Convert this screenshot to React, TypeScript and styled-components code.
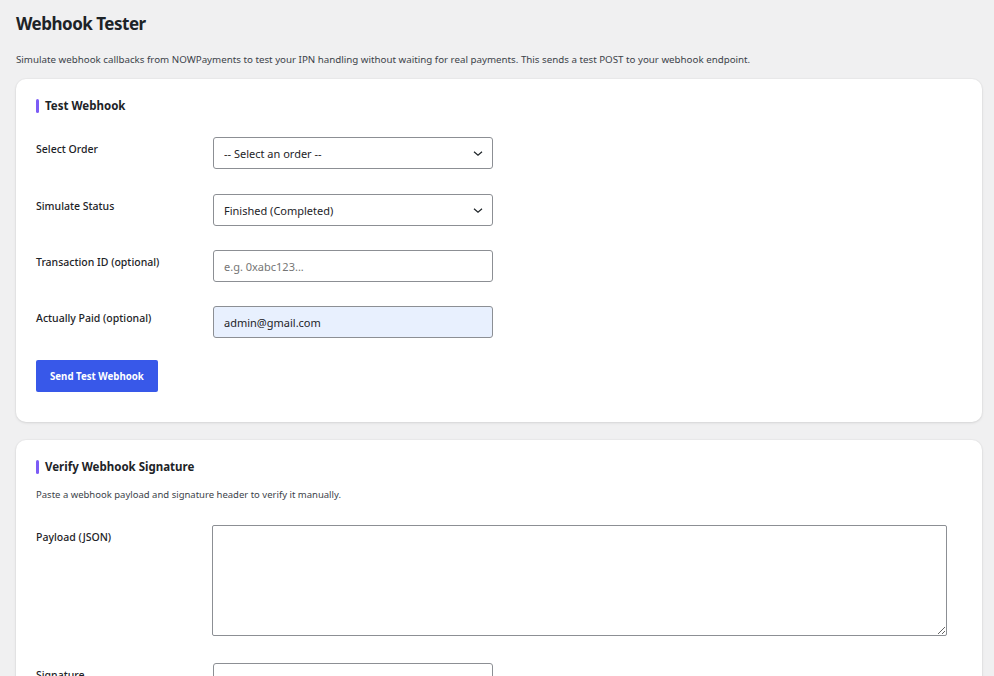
import React from 'react';
import styled, { createGlobalStyle } from 'styled-components';

const GlobalStyle = createGlobalStyle`
  html, body {
    margin: 0;
    padding: 0;
    background: #f0f0f1;
  }

  body {
    font-family: "Noto Sans", "Open Sans", sans-serif;
    color: #1d2327;
  }

  * {
    box-sizing: border-box;
  }
`;

const Page = styled.div`
  padding: 11px 12px 40px 16px;
`;

const PageTitle = styled.h1`
  margin: 0;
  font-size: 17px;
  line-height: 26px;
  font-weight: 700;
  letter-spacing: -0.5px;
  color: #1d2327;
`;

const Intro = styled.p`
  margin: 16px 0 12px;
  font-size: 9.75px;
  line-height: 14px;
  color: #3c434a;
`;

const Card = styled.section`
  background: #fff;
  border-radius: 10px;
  box-shadow: 0 1px 3px rgba(0, 0, 0, 0.1), 0 0 0 1px rgba(0, 0, 0, 0.02);
  padding: 20px 20px 30px;
  margin-bottom: 18px;
`;

const CardTitle = styled.h2`
  margin: 0;
  display: flex;
  align-items: center;
  gap: 6px;
  font-size: 11.5px;
  line-height: 14px;
  font-weight: 700;
  color: #1d2327;

  &::before {
    content: '';
    width: 3px;
    height: 14px;
    border-radius: 2px;
    background: #7c5cf6;
  }
`;

const CardText = styled.p`
  margin: 14px 0 0;
  font-size: 9.5px;
  line-height: 14px;
  color: #3c434a;
`;

const Form = styled.div<{ $top: number }>`
  display: grid;
  grid-template-columns: 177px 1fr;
  row-gap: 24px;
  margin-top: ${(p) => p.$top}px;
`;

const Label = styled.label`
  padding-top: 5px;
  font-size: 10.5px;
  line-height: 14px;
  font-weight: 500;
  color: #1d2327;
`;

const Field = styled.div`
  position: relative;
  width: 280px;
`;

const fieldBase = `
  width: 100%;
  height: 32px;
  margin: 0;
  padding: 0 10px;
  border: 1px solid #8c8f94;
  border-radius: 3px;
  font-family: "Noto Sans", "Open Sans", sans-serif;
  font-size: 11px;
  color: #1d2327;
  outline: none;
`;

const Select = styled.select<{ $first?: boolean }>`
  ${fieldBase}
  appearance: none;
  background: #fff;
  padding-right: 28px;
  margin-bottom: ${(p) => (p.$first ? '1px' : '0')};
`;

const Chevron = styled.svg`
  position: absolute;
  right: 10px;
  top: 14px;
  pointer-events: none;
`;

const Input = styled.input<{ $filled?: boolean }>`
  ${fieldBase}
  background: ${(p) => (p.$filled ? '#e8f0fe' : '#fff')};

  ::placeholder {
    color: #8c8f94;
  }
`;

const TextArea = styled.textarea`
  display: block;
  width: 735px;
  height: 111px;
  margin: 0 0 3px -1px;
  border: 1px solid #8c8f94;
  border-radius: 2px;
  font-family: "Liberation Mono", monospace;
  font-size: 11px;
  padding: 6px 8px;
  outline: none;
`;

const Button = styled.button`
  margin-top: 22px;
  height: 32px;
  padding: 0 14px;
  border: none;
  border-radius: 2px;
  background: #3858e9;
  color: #fff;
  font-family: "Noto Sans", "Open Sans", sans-serif;
  font-size: 9.7px;
  font-weight: 700;
  cursor: pointer;
`;

function SelectField({ value, options, first }: { value: string; options: string[]; first?: boolean }) {
  return (
    <Field>
      <Select defaultValue={value} $first={first}>
        {options.map((o) => (
          <option key={o}>{o}</option>
        ))}
      </Select>
      <Chevron width="10" height="5" viewBox="0 0 10 5">
        <path d="M1 0.8l4 3.4l4-3.4" fill="none" stroke="#1d2327" strokeWidth="1.2" />
      </Chevron>
    </Field>
  );
}

export default function App(): React.ReactElement {
  return (
    <>
      <GlobalStyle />
      <Page>
        <PageTitle>Webhook Tester</PageTitle>
        <Intro>
          Simulate webhook callbacks from NOWPayments to test your IPN handling without waiting for real payments. This
          sends a test POST to your webhook endpoint.
        </Intro>

        <Card>
          <CardTitle>Test Webhook</CardTitle>
          <Form $top={24}>
            <Label>Select Order</Label>
            <SelectField value="-- Select an order --" options={['-- Select an order --']} first />

            <Label>Simulate Status</Label>
            <SelectField
              value="Finished (Completed)"
              options={['Finished (Completed)', 'Waiting', 'Confirming', 'Partially Paid', 'Failed', 'Expired']}
            />

            <Label>Transaction ID (optional)</Label>
            <Field>
              <Input type="text" placeholder="e.g. 0xabc123..." />
            </Field>

            <Label>Actually Paid (optional)</Label>
            <Field>
              <Input type="text" defaultValue="admin@gmail.com" $filled />
            </Field>
          </Form>
          <Button type="button">Send Test Webhook</Button>
        </Card>

        <Card>
          <CardTitle>Verify Webhook Signature</CardTitle>
          <CardText>Paste a webhook payload and signature header to verify it manually.</CardText>
          <Form $top={23}>
            <Label>Payload (JSON)</Label>
            <TextArea />

            <Label>Signature</Label>
            <Field>
              <Input type="text" />
            </Field>
          </Form>
        </Card>
      </Page>
    </>
  );
}
